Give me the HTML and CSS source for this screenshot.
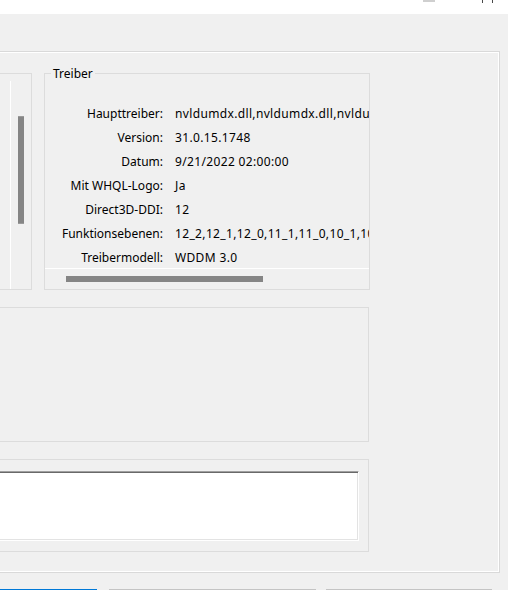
FILE: index.html
```html
<!DOCTYPE html>
<html lang="de">
<head>
<meta charset="utf-8">
<title>Treiber</title>
<link rel="stylesheet" href="styles.css">
</head>
<body>
<div class="titlebar">
  <svg class="caption" width="508" height="14" viewBox="0 0 508 14">
    <rect x="423" y="0" width="12" height="2" fill="#cfcfcf"/>
    <rect x="482" y="0" width="1" height="3" fill="#4a4a4a"/>
    <rect x="492" y="0" width="1" height="3" fill="#4a4a4a"/>
  </svg>
</div>
<div class="window">
  <div class="panel">
    <div class="row-top">
      <div class="group group-left">
        <div class="list"></div>
        <div class="vscroll"><div class="vthumb"></div></div>
      </div>
      <div class="group group-driver">
        <span class="legend">Treiber</span>
        <div class="viewport">
          <div class="props">
            <span class="key">Haupttreiber:</span><span class="val">nvldumdx.dll,nvldumdx.dll,nvldumdx.dll,nvldumdx.dll</span>
            <span class="key">Version:</span><span class="val">31.0.15.1748</span>
            <span class="key">Datum:</span><span class="val">9/21/2022 02:00:00</span>
            <span class="key">Mit WHQL-Logo:</span><span class="val">Ja</span>
            <span class="key">Direct3D-DDI:</span><span class="val">12</span>
            <span class="key">Funktionsebenen:</span><span class="val">12_2,12_1,12_0,11_1,11_0,10_1,10_0,9_3,9_2,9_1</span>
            <span class="key">Treibermodell:</span><span class="val">WDDM 3.0</span>
          </div>
        </div>
        <div class="hscroll"><div class="hthumb"></div></div>
      </div>
    </div>
    <div class="group group-mid"></div>
    <div class="group group-low">
      <div class="edit"></div>
    </div>
  </div>
  <div class="buttons">
    <div class="btn btn-default"></div>
    <div class="btn btn-wide"></div>
    <div class="btn btn-mid"></div>
  </div>
</div>
</body>
</html>
```
FILE: styles.css
```css
html, body {
  margin: 0;
  padding: 0;
}
body {
  width: 508px;
  height: 590px;
  overflow: hidden;
  background: #f0f0f0;
  font-family: "Noto Sans", "Open Sans", sans-serif;
  font-size: 12px;
  color: #000;
}
.titlebar {
  height: 14px;
  background: #fff;
  overflow: hidden;
}
.caption {
  display: block;
}
.window {
  padding-top: 37px;
}
.panel {
  box-sizing: border-box;
  margin-left: -20px;
  width: 520px;
  height: 522px;
  border: 1px solid #d9d9d9;
  box-shadow: inset 0 0 0 1px #fff;
  padding: 21px 0 0 10px;
}
.row-top {
  display: flex;
  height: 217px;
}
.group {
  box-sizing: border-box;
  border: 1px solid #dcdcdc;
}
.group-left {
  width: 41px;
  display: flex;
  padding-top: 7px;
}
.list {
  box-sizing: border-box;
  width: 19px;
  border-right: 1px solid #fff;
}
.vscroll {
  margin-left: 7px;
}
.vthumb {
  margin-top: 35px;
  width: 6px;
  height: 108px;
  background: #858585;
  box-shadow: inset 0 1px 0 #9a9a9a, inset 0 -1px 0 #9a9a9a;
}
.group-driver {
  position: relative;
  margin-left: 12px;
  width: 326px;
}
.legend {
  position: absolute;
  top: -8px;
  left: 6px;
  padding: 0 2px;
  line-height: 16px;
  background: #f0f0f0;
}
.viewport {
  height: 194px;
  border-bottom: 1px solid #fff;
  overflow: hidden;
}
.props {
  display: grid;
  grid-template-columns: 118px auto;
  column-gap: 12px;
  padding-top: 28px;
  line-height: 24px;
  white-space: nowrap;
}
.key {
  text-align: right;
}
.val {
  letter-spacing: 0.35px;
}
.hscroll {
  height: 20px;
  padding-top: 7px;
  box-sizing: border-box;
}
.hthumb {
  margin-left: 21px;
  width: 197px;
  height: 6px;
  background: #858585;
}
.group-mid {
  margin-top: 17px;
  width: 378px;
  height: 135px;
}
.group-low {
  margin-top: 17px;
  width: 378px;
  height: 93px;
  padding: 11px 9px 0 0;
}
.edit {
  box-sizing: border-box;
  height: 70px;
  background: #fff;
  border-top: 1px solid #a0a0a0;
  border-left: 1px solid #a0a0a0;
  border-right: 1px solid #fff;
  border-bottom: 1px solid #fff;
  box-shadow: inset 1px 1px 0 #696969, inset -1px -1px 0 #e3e3e3;
}
.buttons {
  display: flex;
  margin-top: 16px;
}
.btn {
  box-sizing: border-box;
  height: 23px;
  background: #e1e1e1;
  border: 1px solid #c4c4c4;
}
.btn-default {
  margin-left: -20px;
  width: 117px;
  border-color: #0078d7;
}
.btn-wide {
  margin-left: 12px;
  width: 207px;
}
.btn-mid {
  margin-left: 10px;
  width: 166px;
}
```
